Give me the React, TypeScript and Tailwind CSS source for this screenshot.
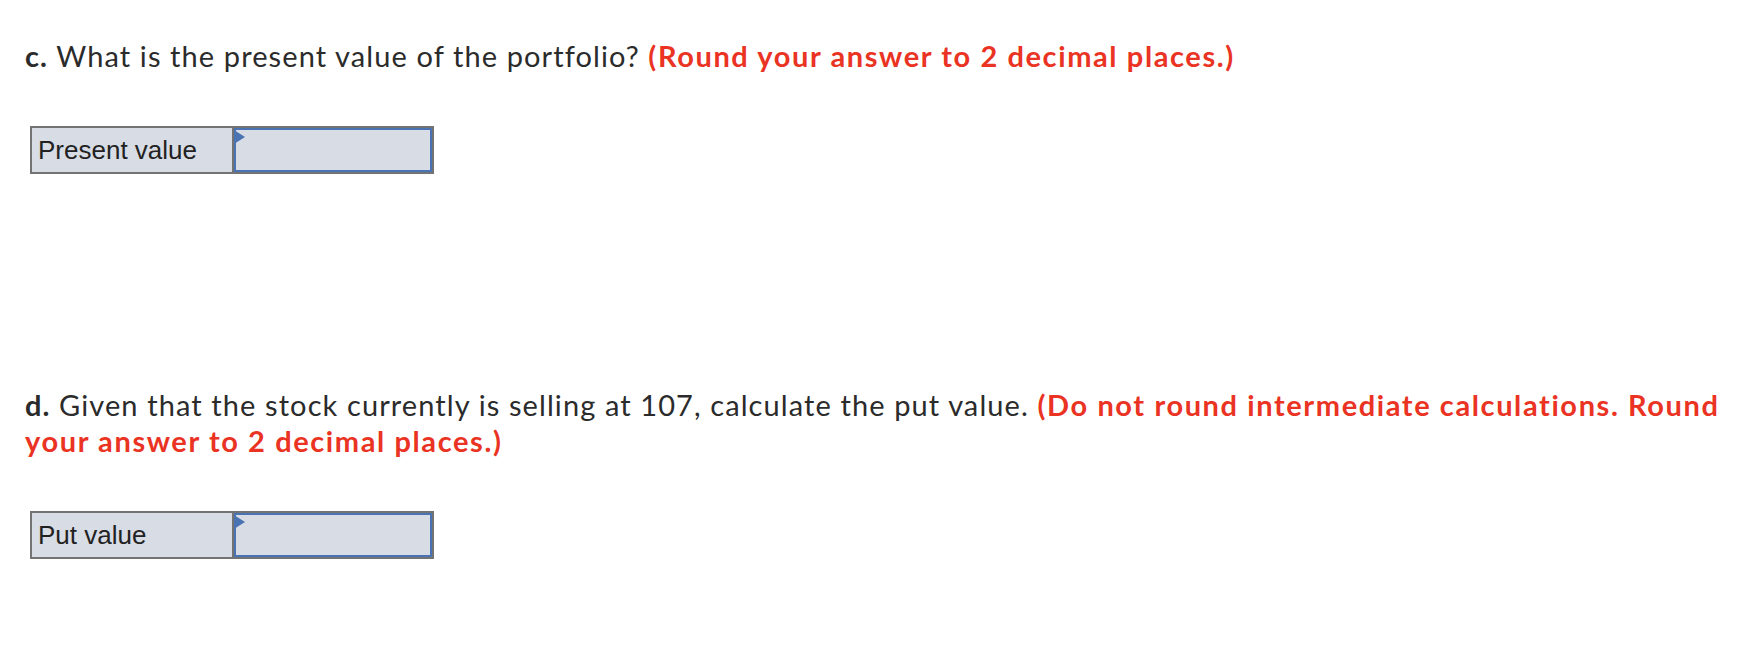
export default function App() {
  const question =
    "font-['Lato','Open_Sans',sans-serif] text-[29px] leading-[36px] tracking-[1.1px] text-[#2b2b2b]";
  const note = "font-bold tracking-[1.6px] text-[#ea3323]";

  return (
    <main className="min-h-screen w-[1760px] bg-white pl-[25px] pr-[10px] pt-[38px]">
      <p className={question}>
        <span className="font-bold">c.</span> What is the present value of the portfolio?{" "}
        <span className={note}>(Round your answer to 2 decimal places.)</span>
      </p>

      <AnswerRow label="Present value" className="mt-[52px]" />

      <p className={`${question} mt-[213px]`}>
        <span className="font-bold">d.</span> Given that the stock currently is selling at 107, calculate the put value.{" "}
        <span className={note}>
          (Do not round intermediate calculations. Round
          <br />
          your answer to 2 decimal places.)
        </span>
      </p>

      <AnswerRow label="Put value" className="mt-[52px]" />
    </main>
  );
}

function AnswerRow({ label, className }: { label: string; className?: string }) {
  return (
    <div className={`ml-[5px] flex h-[48px] w-[404px] border-2 border-[#737373] ${className ?? ""}`}>
      <div className="flex w-[202px] items-center border-r-2 border-[#737373] bg-[#d8dce5] pl-[6px] font-['Liberation_Sans',Arial,sans-serif] text-[26px] text-[#222]">
        {label}
      </div>
      <div className="relative flex-1 border-2 border-[#4a73b4] bg-[#d8dce5]">
        <svg
          className="absolute left-[-2px] top-0"
          width="11"
          height="14"
          viewBox="0 0 11 14"
        >
          <polygon points="0,0 11,7 0,14" fill="#4a73b4" />
        </svg>
      </div>
    </div>
  );
}
